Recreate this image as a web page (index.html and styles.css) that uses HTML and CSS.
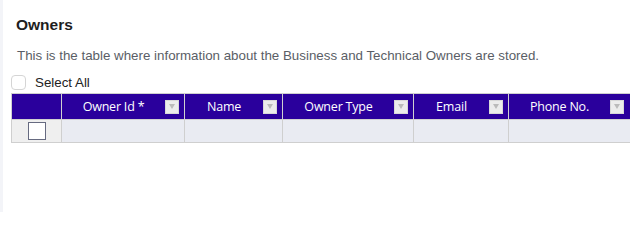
FILE: index.html
```html
<!DOCTYPE html>
<html>
<head>
<meta charset="utf-8">
<link rel="stylesheet" href="styles.css">
</head>
<body>
<div class="page">
  <h1 class="title">Owners</h1>
  <p class="desc">This is the table where information about the Business and Technical Owners are stored.</p>
  <label class="select-all"><span class="cb-round"></span><span>Select All</span></label>
  <div class="table">
    <div class="row head">
      <div class="cell c0"></div>
      <div class="cell c1"><span class="lbl">Owner Id *</span><span class="fbtn"><svg width="6" height="5" viewBox="0 0 6 5"><path d="M0 0H6L3 5Z" fill="#bbb"/></svg></span></div>
      <div class="cell c2"><span class="lbl">Name</span><span class="fbtn"><svg width="6" height="5" viewBox="0 0 6 5"><path d="M0 0H6L3 5Z" fill="#bbb"/></svg></span></div>
      <div class="cell c3"><span class="lbl">Owner Type</span><span class="fbtn"><svg width="6" height="5" viewBox="0 0 6 5"><path d="M0 0H6L3 5Z" fill="#bbb"/></svg></span></div>
      <div class="cell c4"><span class="lbl">Email</span><span class="fbtn"><svg width="6" height="5" viewBox="0 0 6 5"><path d="M0 0H6L3 5Z" fill="#bbb"/></svg></span></div>
      <div class="cell c5"><span class="lbl">Phone No.</span><span class="fbtn"><svg width="6" height="5" viewBox="0 0 6 5"><path d="M0 0H6L3 5Z" fill="#bbb"/></svg></span></div>
    </div>
    <div class="row body">
      <div class="cell c0"><span class="cb-sq"></span></div>
      <div class="cell c1"></div>
      <div class="cell c2"></div>
      <div class="cell c3"></div>
      <div class="cell c4"></div>
      <div class="cell c5"></div>
    </div>
  </div>
</div>
</body>
</html>
```
FILE: styles.css
```css
html, body {
  margin: 0;
  padding: 0;
  background: #fff;
  overflow: hidden;
}
.page {
  width: 630px;
  height: 212px;
  box-sizing: border-box;
  border-left: 3px solid #f3f4f8;
  padding: 15px 0 0 8px;
  font-family: "Liberation Sans", Arial, sans-serif;
  overflow: hidden;
}
.title {
  margin: 0 0 0 5px;
  font-size: 15.5px;
  font-weight: bold;
  color: #1e1e1e;
  line-height: 20px;
}
.desc {
  margin: 12px 0 0 6px;
  font-size: 13.33px;
  color: #5a5e66;
  line-height: 18px;
}
.select-all {
  display: flex;
  align-items: center;
  margin-top: 8px;
  height: 18px;
  font-size: 13.33px;
  color: #222;
}
.cb-round {
  width: 13px;
  height: 13px;
  border: 1px solid #d5d5d5;
  border-radius: 4px;
  margin-right: 9px;
  background: #fff;
}
.table {
  margin-top: 2px;
  width: 660px;
  border-left: 1px solid #cfcfcf;
  border-top: 1px solid #cfcfcf;
}
.row {
  display: flex;
}
.cell {
  box-sizing: border-box;
  border-right: 1px solid #cfcfcf;
  border-bottom: 1px solid #cfcfcf;
  display: flex;
  align-items: center;
  flex: none;
}
.head .cell {
  height: 26px;
  background: #2a009c;
  border-right-color: #d0d0d0;
  border-bottom-color: #d0d0d0;
}
.body .cell {
  height: 23px;
  background: #e9ebf2;
}
.body .c0 {
  background: #efefef;
  justify-content: center;
}
.c0 { width: 50px; }
.c1 { width: 123px; }
.c2 { width: 98px; }
.c3 { width: 131px; }
.c4 { width: 95px; }
.c5 { width: 140px; }
.lbl {
  flex: 1;
  text-align: center;
  color: #fff;
  font-family: "Open Sans", sans-serif;
  font-size: 12.5px;
  letter-spacing: -0.2px;
}
.fbtn {
  width: 14px;
  height: 14px;
  background: #ececec;
  border: 1px solid #d8d8d8;
  box-sizing: border-box;
  margin-right: 5px;
  display: flex;
  align-items: center;
  justify-content: center;
}
.c5 .fbtn { margin-right: 24px; }
.cb-sq {
  width: 18px;
  height: 18px;
  box-sizing: border-box;
  border: 1.5px solid #666a80;
  background: #fff;
  margin-left: 1px;
}
```
